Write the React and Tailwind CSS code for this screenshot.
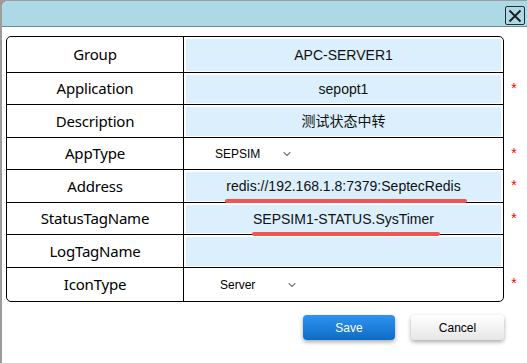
import { ChevronDown } from 'lucide-react';

const rows = [
  { label: 'Group', value: 'APC-SERVER1', h: 'h-[36px]' },
  { label: 'Application', value: 'sepopt1', required: true, h: 'h-[32px]' },
  { label: 'Description', value: '测试状态中转', h: 'h-[33px]' },
  { label: 'AppType', select: 'SEPSIM', pad: 'pl-[29px]', required: true, h: 'h-[32px]' },
  { label: 'Address', value: 'redis://192.168.1.8:7379:SeptecRedis', mark: true, required: true, h: 'h-[33px]' },
  { label: 'StatusTagName', value: 'SEPSIM1-STATUS.SysTimer', mark: true, required: true, h: 'h-[32px]' },
  { label: 'LogTagName', value: '', h: 'h-[33px]' },
  { label: 'IconType', select: 'Server', pad: 'pl-[34px]', required: true, h: 'h-[33px]', last: true },
];

const App = () => {
  return (
    <div className="w-[527px] h-[363px] bg-[#9c9c9c] pl-[2px] pt-[1px] overflow-hidden">
      <div className="h-full bg-white rounded-tl-[6px] overflow-hidden font-['Liberation_Sans','Noto_Sans_CJK_SC',sans-serif]">
        {/* Title bar */}
        <div className="h-[26px] bg-[#add8e6] border-b border-[#6d8d97] flex items-start justify-end pr-[2px] pt-[5px]">
          <button className="w-[20px] h-[19px] border border-[#2b2b2b] rounded-[2px] flex items-center justify-center">
            <svg width="14" height="14" viewBox="0 0 14 14">
              <path d="M1.5 1.5 L12.5 12.5 M12.5 1.5 L1.5 12.5" stroke="#1a1a1a" strokeWidth="1.8" />
            </svg>
          </button>
        </div>

        {/* Form table */}
        <div className="flex items-start pl-[4px] pt-[9px]">
          <div className="w-[498px] border border-black rounded-[5px] overflow-hidden">
            {rows.map((row) => (
              <div
                key={row.label}
                className={`${row.h} flex ${row.last ? '' : 'border-b border-black'}`}
              >
                <div className="w-[177px] border-r border-black flex items-center justify-center text-[15px] text-black font-['Noto_Sans',sans-serif] tracking-[-0.2px]">
                  {row.label}
                </div>
                <div className="flex-1 px-[2px] pt-[2px] pb-[1px]">
                  {row.select ? (
                    <div className={`h-full flex items-center ${row.pad} text-[12px] text-black`}>
                      <span className="w-[66px]">{row.select}</span>
                      <ChevronDown className="w-[12px] h-[12px] text-[#777]" strokeWidth={2.2} />
                    </div>
                  ) : (
                    <div className="h-full bg-[#dbeffc] flex items-center justify-center text-[14px] text-[#111] relative">
                      <span className="relative">
                        {row.value}
                        {row.mark && (
                          <span className="absolute left-[-1px] right-[-6px] bottom-[-6px] h-[4px] rounded-full bg-[#f05454]" />
                        )}
                      </span>
                    </div>
                  )}
                </div>
              </div>
            ))}
          </div>
          <div className="w-[20px] relative">
            {rows.map((row) => (
              <div key={row.label} className={`${row.h} flex items-center justify-center text-[#f00] text-[14px]`}>
                {row.required ? '*' : ''}
              </div>
            ))}
          </div>
        </div>

        {/* Buttons */}
        <div className="flex justify-start pl-[301px] pt-[13px] gap-[16px]">
          <button className="w-[92px] h-[25px] rounded-[4px] bg-gradient-to-b from-[#2f93f2] to-[#0b6cc5] text-white text-[12px] shadow-[0_2px_4px_rgba(0,0,0,0.35)]">
            Save
          </button>
          <button className="w-[93px] h-[25px] rounded-[4px] bg-gradient-to-b from-white to-[#e6e6e6] text-black text-[12px] shadow-[0_2px_4px_rgba(0,0,0,0.35)]">
            Cancel
          </button>
        </div>
      </div>
    </div>
  );
};

export default App;
